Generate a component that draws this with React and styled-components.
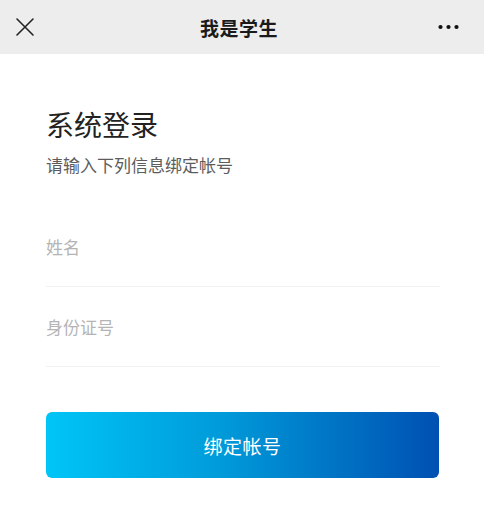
import styled, { createGlobalStyle } from 'styled-components';

const GlobalStyle = createGlobalStyle`
  html, body {
    margin: 0;
    padding: 0;
    background: #ffffff;
    font-family: "Noto Sans CJK SC", "Noto Sans", sans-serif;
  }
  * { box-sizing: border-box; }
`;

const Page = styled.div`
  width: 486px;
  min-height: 512px;
  background: #ffffff;
`;

const NavBar = styled.header`
  width: 484px;
  height: 54px;
  background: #ededed;
  display: grid;
  grid-template-columns: 60px 1fr 66px;
  align-items: center;
`;

const NavButton = styled.button`
  border: none;
  background: transparent;
  padding: 0;
  height: 54px;
  display: flex;
  align-items: center;
  justify-content: ${(p) => (p.$right ? 'flex-end' : 'flex-start')};
  padding-left: ${(p) => (p.$right ? '0' : '15px')};
  padding-right: ${(p) => (p.$right ? '25px' : '0')};
  cursor: pointer;
`;

const NavTitle = styled.h1`
  margin: 0;
  text-align: center;
  font-size: 19px;
  font-weight: 600;
  color: #1a1a1a;
  letter-spacing: 0.5px;
`;

const Content = styled.main`
  padding: 50px 46px 0 46px;
  display: flex;
  flex-direction: column;
`;

const Heading = styled.h2`
  margin: 0;
  font-size: 28px;
  line-height: 40px;
  font-weight: 400;
  color: #222222;
`;

const SubTitle = styled.p`
  margin: 9px 0 0 0;
  font-size: 17px;
  line-height: 24px;
  color: #5c5c5c;
`;

const Form = styled.form`
  margin-top: 30px;
  display: flex;
  flex-direction: column;
`;

const Field = styled.div`
  height: 80px;
  border-bottom: 1px solid #f1f1f1;
  display: flex;
  align-items: center;
`;

const Input = styled.input`
  width: 100%;
  border: none;
  outline: none;
  background: transparent;
  padding: 0;
  font-family: inherit;
  font-size: 17px;
  line-height: 24px;
  color: #333333;

  &::placeholder {
    color: #b4b4b4;
  }
`;

const SubmitButton = styled.button`
  margin-top: 45px;
  width: 393px;
  height: 66px;
  border: none;
  border-radius: 6px;
  background: linear-gradient(90deg, #00c5f7 0%, #009ad9 45%, #0050b2 100%);
  color: #ffffff;
  font-family: inherit;
  font-size: 19px;
  letter-spacing: 0.5px;
  cursor: pointer;
`;

const CloseIcon = () => (
  <svg width="20" height="20" viewBox="0 0 20 20">
    <path d="M2 2 L18 18 M18 2 L2 18" stroke="#222" strokeWidth="1.6" strokeLinecap="round" />
  </svg>
);

const MoreIcon = () => (
  <svg width="21" height="6" viewBox="0 0 21 6">
    <circle cx="2.5" cy="3" r="2.1" fill="#111" />
    <circle cx="10.5" cy="3" r="2.1" fill="#111" />
    <circle cx="18.5" cy="3" r="2.1" fill="#111" />
  </svg>
);

export default function App() {
  return (
    <Page>
      <GlobalStyle />
      <NavBar>
        <NavButton aria-label="关闭">
          <CloseIcon />
        </NavButton>
        <NavTitle>我是学生</NavTitle>
        <NavButton $right aria-label="更多">
          <MoreIcon />
        </NavButton>
      </NavBar>
      <Content>
        <Heading>系统登录</Heading>
        <SubTitle>请输入下列信息绑定帐号</SubTitle>
        <Form onSubmit={(e) => e.preventDefault()}>
          <Field>
            <Input placeholder="姓名" />
          </Field>
          <Field>
            <Input placeholder="身份证号" />
          </Field>
          <SubmitButton type="submit">绑定帐号</SubmitButton>
        </Form>
      </Content>
    </Page>
  );
}
